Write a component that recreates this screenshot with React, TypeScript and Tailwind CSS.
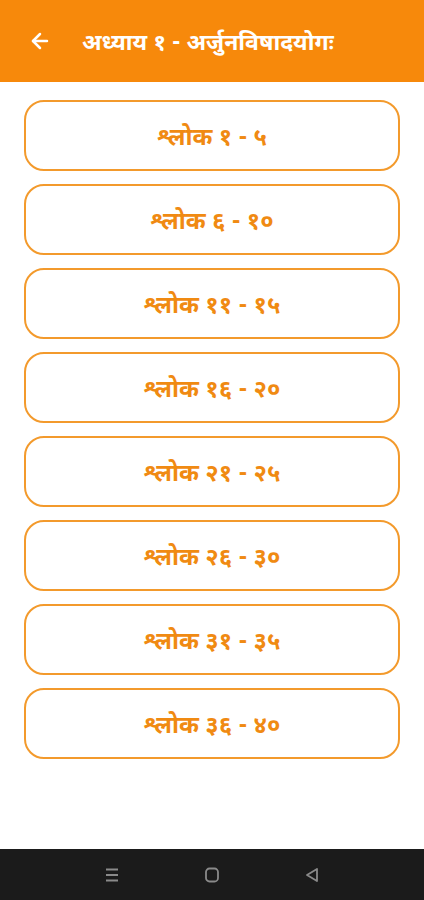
import { ArrowLeft } from 'lucide-react'

const ranges = [
  '१ - ५',
  '६ - १०',
  '११ - १५',
  '१६ - २०',
  '२१ - २५',
  '२६ - ३०',
  '३१ - ३५',
  '३६ - ४०',
]

export default function App() {
  return (
    <div className="flex h-[900px] w-[424px] flex-col bg-white font-['Noto_Sans_Devanagari','Noto_Sans',sans-serif]">
      {/* Header */}
      <div className="flex h-[82px] shrink-0 items-center bg-[#f7890b] pl-[28px] text-white">
        <ArrowLeft className="h-[24px] w-[24px]" strokeWidth={2.5} />
        <h1 className="ml-[30px] pt-[6px] text-[23px] font-bold">अध्याय १ - अर्जुनविषादयोगः</h1>
      </div>

      {/* Shlok list */}
      <div className="flex flex-1 flex-col gap-[13px] px-6 pt-[18px]">
        {ranges.map((r) => (
          <button
            key={r}
            type="button"
            className="flex h-[71px] items-center justify-center rounded-[20px] border-2 border-[#f39a2c] pt-[6px] text-[24px] font-bold text-[#f08a12]"
          >
            श्लोक {r}
          </button>
        ))}
      </div>

      {/* Android nav bar */}
      <div className="flex h-[51px] shrink-0 items-center justify-center gap-[82px] bg-[#1b1b1b]">
        <svg width="18" height="18" viewBox="0 0 18 18" fill="none" stroke="#8a8a8a" strokeWidth="1.8">
          <path d="M3 3.5h12M3 9h12M3 14.5h12" />
        </svg>
        <svg width="18" height="18" viewBox="0 0 18 18" fill="none" stroke="#8a8a8a" strokeWidth="1.8">
          <rect x="3" y="2.5" width="12" height="13" rx="3.5" />
        </svg>
        <svg width="18" height="18" viewBox="0 0 18 18" fill="none" stroke="#8a8a8a" strokeWidth="1.8" strokeLinejoin="round">
          <path d="M14 3L4 9l10 6z" />
        </svg>
      </div>
    </div>
  )
}
